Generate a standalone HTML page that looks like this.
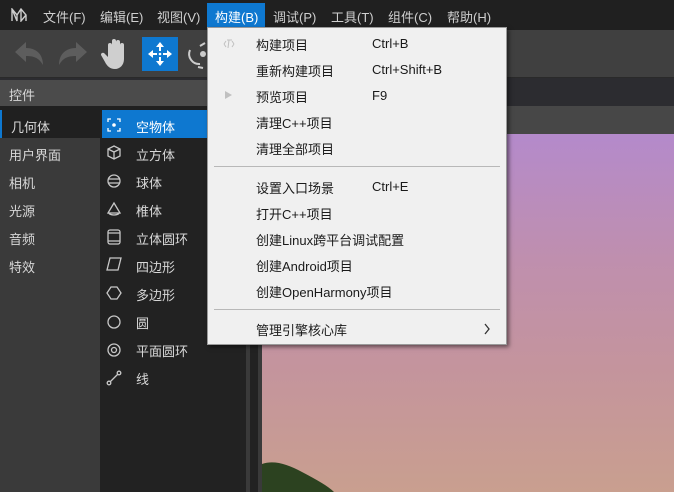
<!DOCTYPE html>
<html><head><meta charset="utf-8"><style>
*{margin:0;padding:0;box-sizing:border-box}
body{width:674px;height:492px;overflow:hidden;background:#202020;font-family:"Liberation Sans","Noto Sans CJK SC",sans-serif;font-size:13px;position:relative}
.a{position:absolute;white-space:nowrap}
.mb span{position:absolute;top:7px;color:#cfcfcf;font-size:13px}
.menu{left:207px;top:27px;width:300px;height:318px;background:#f0f0f0;border:1px solid #9a9a9a;box-shadow:2px 2px 4px rgba(0,0,0,.5)}
.menu .it{position:absolute;left:48px;color:#1a1a1a;font-size:13px;white-space:nowrap;margin-top:-2px}
.menu .sc{position:absolute;left:164px;color:#1a1a1a;font-size:13px;white-space:nowrap;margin-top:-1px}
.sep{position:absolute;left:6px;width:286px;height:1px;background:#b8b8b8}
.l1 div{position:absolute;left:9px;color:#d8d8d8;font-size:13px;white-space:nowrap}
.l2 div{position:absolute;left:136px;color:#d8d8d8;font-size:13px;white-space:nowrap}
</style></head><body>
<div class="a mb" style="left:0;top:0;width:674px;height:30px;background:#202020">
<svg class="a" style="left:11px;top:8px" width="16" height="14" viewBox="0 0 16 14"><path d="M1 13V1l5 6 4-6 5 6V13M1 1l5 12V7M10 1v12l5-6" fill="none" stroke="#ccc" stroke-width="1.4"/></svg>
<span style="left:43px">文件(F)</span><span style="left:100px">编辑(E)</span><span style="left:157px">视图(V)</span>
<div class="a" style="left:207px;top:3px;width:58px;height:24px;background:#0e78d0"></div>
<span style="left:215px;color:#fff">构建(B)</span><span style="left:273px">调试(P)</span><span style="left:331px">工具(T)</span><span style="left:388px">组件(C)</span><span style="left:447px">帮助(H)</span>
</div>
<div class="a" style="left:0;top:30px;width:674px;height:47px;background:#404040"></div>
<div class="a" style="left:0;top:77px;width:674px;height:1px;background:#2a2a2a"></div>
<svg class="a" style="left:12px;top:40px" width="34" height="28" viewBox="0 0 34 28"><path d="M3 12l11-10v6c10 0 17 6 17 17-4-7-9-9-17-9v6z" fill="#5d5d5d"/></svg>
<svg class="a" style="left:56px;top:40px" width="34" height="28" viewBox="0 0 34 28"><path d="M31 12L20 2v6C10 8 3 14 3 25c4-7 9-9 17-9v6z" fill="#5d5d5d"/></svg>
<svg class="a" style="left:101px;top:37px" width="30" height="34" viewBox="0 0 30 34"><path d="M7 20V8a2 2 0 014 0v9V4a2 2 0 014 0v13V5a2 2 0 014 0v12V8a2 2 0 014 0v14c0 6-4 10-9 10s-8-3-10-7l-4-7a2 2 0 013-2z" fill="#cfcfcf"/></svg>
<div class="a" style="left:142px;top:37px;width:36px;height:34px;background:#0e78d0"></div>
<svg class="a" style="left:144px;top:38px" width="32" height="32" viewBox="0 0 32 32"><path d="M16 4l-4 5h8zM16 28l-4-5h8zM4 16l5-4v8zM28 16l-5-4v8z" fill="#fff"/><path d="M16 8v5M16 19v5M8 16h5M19 16h5" stroke="#fff" stroke-width="2"/><circle cx="16" cy="16" r="1.3" fill="#fff"/></svg>
<svg class="a" style="left:186px;top:40px" width="22" height="30" viewBox="0 0 22 30"><path d="M4 10a10 10 0 0010 14" fill="none" stroke="#ccc" stroke-width="2"/><circle cx="17" cy="14" r="3" fill="#ccc"/><path d="M14 6l5-3M12 27l5 1" stroke="#ccc" stroke-width="2"/></svg>
<div class="a" style="left:0;top:78px;width:674px;height:28px;background:#2c2c30"></div>
<div class="a" style="left:0;top:80px;width:246px;height:26px;background:#4b4b4b"></div>
<div class="a" style="left:9px;top:85px;color:#d8d8d8">控件</div>
<div class="a" style="left:246px;top:106px;width:428px;height:28px;background:#474747"></div>
<div class="a l1" style="left:0;top:110px;width:100px;height:382px;background:#3a3a3a">
<div class="a" style="left:0;top:0;width:100px;height:28px;background:#202020"></div>
<div class="a" style="left:0;top:0;width:2px;height:28px;background:#0e78d0"></div>
<div style="top:7px;left:11px">几何体</div><div style="top:35px">用户界面</div><div style="top:63px">相机</div><div style="top:91px">光源</div><div style="top:119px">音频</div><div style="top:147px">特效</div>
</div>
<div class="a" style="left:100px;top:110px;width:146px;height:382px;background:#222"></div>
<div class="a" style="left:102px;top:110px;width:144px;height:28px;background:#0e78d0"></div>
<div class="a l2" style="left:0;top:110px;width:246px;height:300px">
<div style="top:7px;color:#fff">空物体</div><div style="top:35px">立方体</div><div style="top:63px">球体</div><div style="top:91px">椎体</div><div style="top:119px">立体圆环</div><div style="top:147px">四边形</div><div style="top:175px">多边形</div><div style="top:203px">圆</div><div style="top:231px">平面圆环</div><div style="top:259px">线</div>
</div>
<svg class="a" style="left:106px;top:117px" width="16" height="270" viewBox="0 0 16 270" fill="none" stroke="#c8c8c8" stroke-width="1.3">
<path d="M2 5V2h3M11 2h3v3M2 11v3h3M11 14h3v-3" stroke="#fff"/><circle cx="8" cy="8" r="1.8" fill="#fff" stroke="none"/>
<path d="M8 29l6 3v7l-6 3-6-3v-7zM2 32l6 3 6-3M8 35v7"/>
<circle cx="8" cy="64" r="6"/><path d="M2 62h12M2 66h12"/>
<path d="M8 86l-6 10h12zM3 96a5 2 0 0010 0"/>
<rect x="2" y="113" width="12" height="14" rx="2"/><path d="M2 116h12M2 124h12"/>
<path d="M4 141h11l-3 12H1z"/>
<path d="M5 170h6l4 6-4 6H5l-4-6z"/>
<circle cx="8" cy="205" r="6"/>
<circle cx="8" cy="233" r="6"/><circle cx="8" cy="233" r="2.5"/>
<circle cx="3" cy="266" r="1.8"/><circle cx="13" cy="256" r="1.8"/><path d="M4 265l8-8"/>
</svg>
<div class="a" style="left:246px;top:134px;width:16px;height:358px;background:#222"></div>
<div class="a" style="left:246px;top:134px;width:4px;height:358px;background:#3a3a3a"></div>
<div class="a" style="left:258px;top:134px;width:4px;height:358px;background:#3a3a3a"></div>
<div class="a" style="left:262px;top:134px;width:412px;height:358px;background:linear-gradient(#b48acb 0%,#bf8fae 35%,#c4949d 65%,#c99f8f 100%)"></div>
<svg class="a" style="left:262px;top:458px" width="80" height="34" viewBox="0 0 80 34"><path d="M0 6C12 2 25 6 40 14 55 22 66 28 72 34H0z" fill="#2c4220"/></svg>
<div class="a menu">
<svg class="a" style="left:14px;top:10px" width="14" height="12" viewBox="0 0 14 12"><path d="M2 6l2-3M2 6l2 3M12 6l-2-3M12 6l-2 3M5 2h5M7 2l-1 8" stroke="#c0c0c0" stroke-width="1" fill="none"/></svg>
<svg class="a" style="left:17px;top:63px" width="8" height="8"><path d="M0 0l7 4-7 4z" fill="#c0c0c0"/></svg>
<div class="it" style="top:9px">构建项目</div><div class="sc" style="top:9px">Ctrl+B</div>
<div class="it" style="top:35px">重新构建项目</div><div class="sc" style="top:35px">Ctrl+Shift+B</div>
<div class="it" style="top:61px">预览项目</div><div class="sc" style="top:61px">F9</div>
<div class="it" style="top:87px">清理C++项目</div>
<div class="it" style="top:113px">清理全部项目</div>
<div class="sep" style="top:138px"></div>
<div class="it" style="top:152px">设置入口场景</div><div class="sc" style="top:152px">Ctrl+E</div>
<div class="it" style="top:178px">打开C++项目</div>
<div class="it" style="top:204px">创建Linux跨平台调试配置</div>
<div class="it" style="top:230px">创建Android项目</div>
<div class="it" style="top:256px">创建OpenHarmony项目</div>
<div class="sep" style="top:281px"></div>
<div class="it" style="top:294px">管理引擎核心库</div>
<svg class="a" style="left:275px;top:295px" width="8" height="12"><path d="M2 1l4 5-4 5" stroke="#333" stroke-width="1.3" fill="none"/></svg>
</div>
</body></html>
